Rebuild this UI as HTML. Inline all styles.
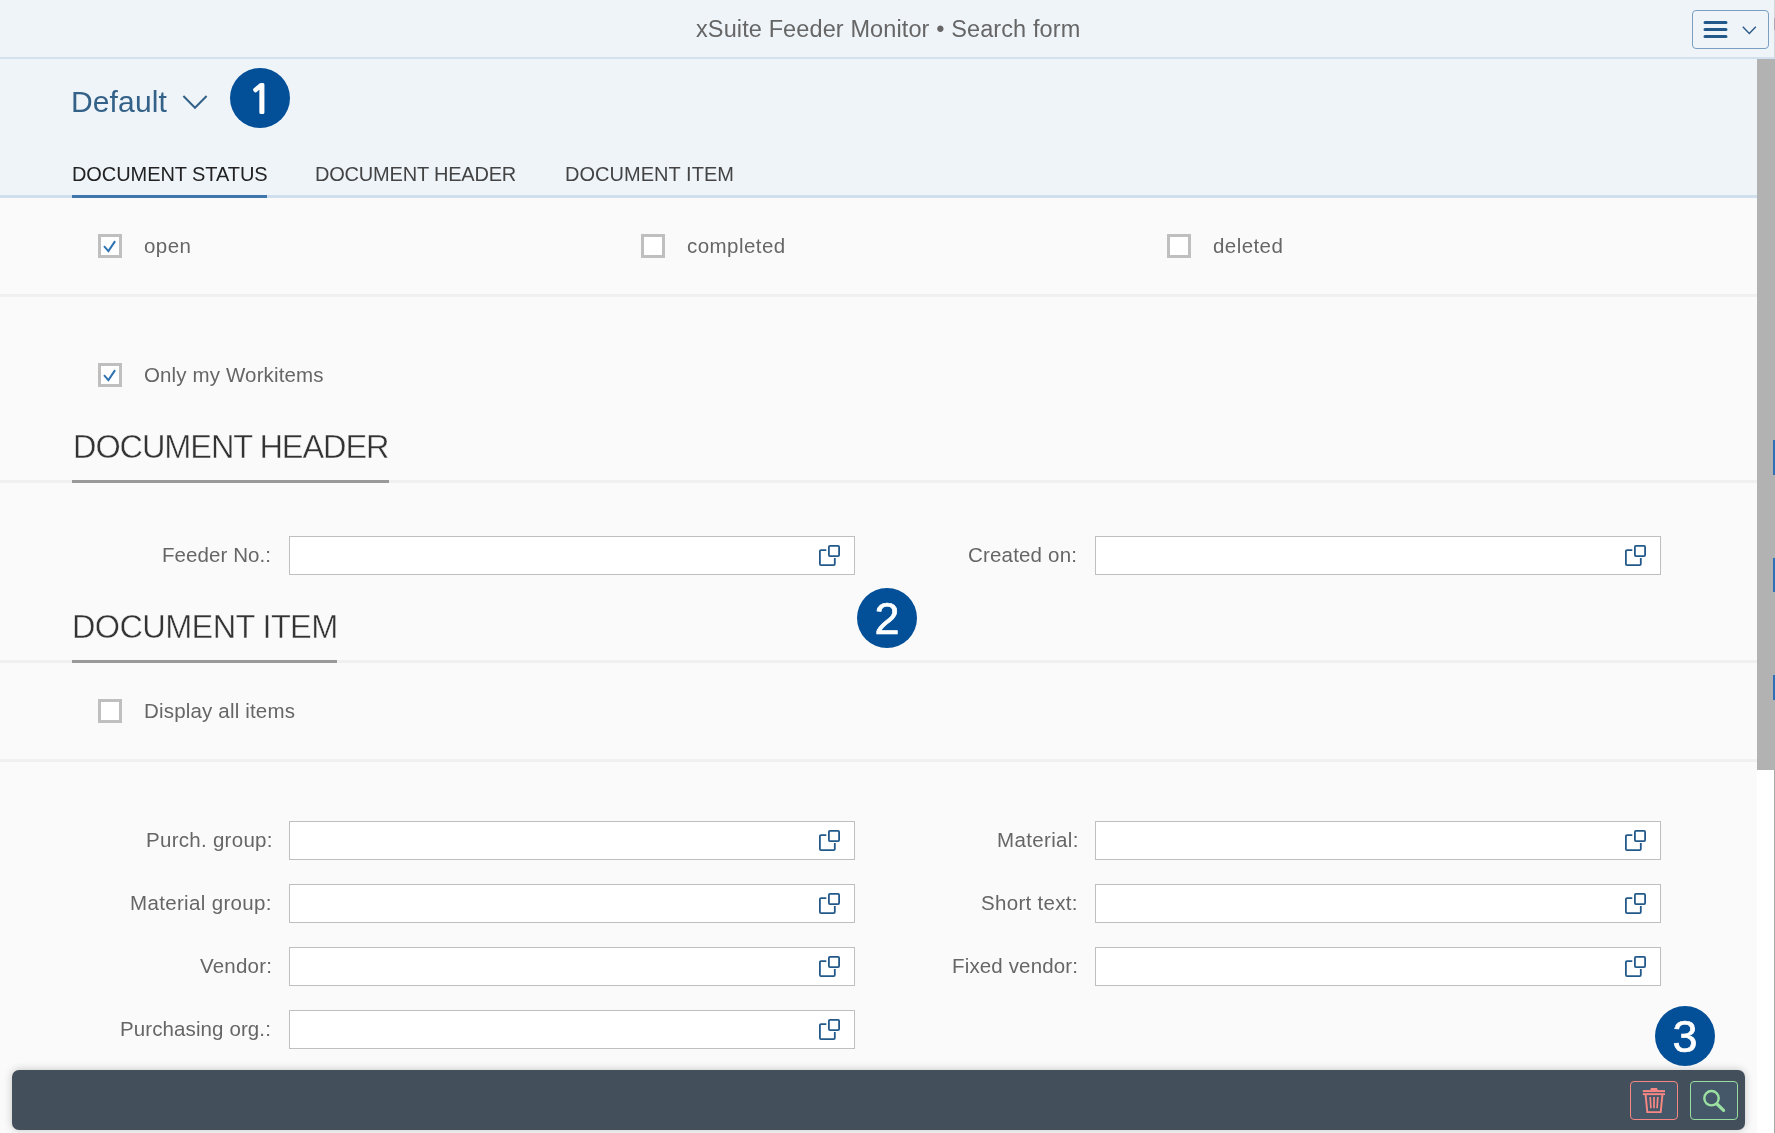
<!DOCTYPE html>
<html><head><meta charset="utf-8"><title>xSuite Feeder Monitor</title>
<style>
*{box-sizing:border-box;margin:0;padding:0}
html,body{width:1775px;height:1133px;overflow:hidden;background:#fafafa;font-family:"Liberation Sans",sans-serif;color:#666}
.abs{position:absolute}
.t{position:absolute;white-space:nowrap;will-change:transform}
#top{left:0;top:0;width:1775px;height:59px;background:#eff4f9;border-bottom:2px solid #d3e1ef}
#menu{left:1692px;top:10px;width:77px;height:39px;border:1px solid #7a9fc2;border-radius:4px;background:#eff4f9}
#hdr{left:0;top:59px;width:1757px;height:139px;background:#eff4f9;border-bottom:3px solid #d0dfee}
#sb{left:1757px;top:59px;width:18px;height:711px;background:#b2b2b2}
#sbw{left:1757px;top:770px;width:18px;height:363px;background:#fff}
.circ{will-change:transform;width:60px;height:60px;border-radius:50%;background:#034f98;color:#fff;font-size:45px;line-height:60px;text-align:center;-webkit-text-stroke:0.7px #fff;padding-top:0.5px}
.c1{font-family:"NanumGothic","Liberation Sans",sans-serif;font-size:40px;-webkit-text-stroke:2.2px #fff;padding-top:1px;padding-left:1px}
.cb{width:24px;height:24px;border:3px solid #bfbfbf;background:#fff}
.inp{width:566px;height:39px;border:1px solid #bfbfbf;background:#fff}
.sep{left:0;width:1757px;height:3px;background:#f0f0f0}
.ul{height:3px;background:#999;left:72px}
#foot{left:12px;top:1070px;width:1733px;height:60px;background:#434f5b;border-radius:7px;box-shadow:0 0 8px rgba(0,0,0,.22)}
.fb{top:1081px;width:48px;height:39px;border-radius:4px;background:#44586a}
</style></head><body>
<div class="abs" id="top"></div>
<div class="t" id="title" style="left:695.80px;top:14.00px;font-size:23.5px;line-height:30px;letter-spacing:0.112px;color:#666;">xSuite Feeder Monitor • Search form</div>
<div class="abs" id="menu">
<svg class="abs" style="left:-1px;top:-1px" width="77" height="39" viewBox="0 0 77 39"><path d="M13 12.5h21M13 19.5h21M13 26.4h21" stroke="#23598a" stroke-width="3" stroke-linecap="round"/><path d="M50.8 16.7l6.5 6.7 6.5-6.7" fill="none" stroke="#2b5a86" stroke-width="1.4"/></svg>
</div>
<div class="abs" id="hdr"></div>
<div class="abs" id="sb"></div><div class="abs" id="sbw"></div>
<div class="abs" style="left:1774px;top:0;width:1px;height:58px;background:#d3d6da"></div>
<div class="abs" style="left:1774px;top:18px;width:1px;height:12px;background:#a9abae"></div>
<div class="abs" style="left:1774px;top:770px;width:1px;height:363px;background:#a8a8a8"></div>
<div class="abs" style="left:1773px;top:440px;width:2px;height:35px;background:#2f6fb5"></div>
<div class="abs" style="left:1773px;top:558px;width:2px;height:34px;background:#2f6fb5"></div>
<div class="abs" style="left:1773px;top:675px;width:2px;height:25px;background:#2f6fb5"></div>
<div class="t" id="default" style="left:71.20px;top:83.00px;font-size:30px;line-height:38px;letter-spacing:0.132px;color:#346187;">Default</div>
<svg class="abs" style="left:180px;top:90px" width="30" height="24" viewBox="0 0 30 24"><path d="M3.4 6l11.6 11.8 11.6-11.8" fill="none" stroke="#346187" stroke-width="2"/></svg>
<div class="abs circ c1" style="left:230px;top:68px">1</div>
<div class="t" id="tab1" style="left:71.80px;top:162.00px;font-size:20px;line-height:24px;letter-spacing:-0.071px;color:#222;">DOCUMENT STATUS</div>
<div class="t" id="tab2" style="left:315.40px;top:162.00px;font-size:20px;line-height:24px;letter-spacing:-0.199px;color:#444;">DOCUMENT HEADER</div>
<div class="t" id="tab3" style="left:565.40px;top:162.00px;font-size:20px;line-height:24px;letter-spacing:0.033px;color:#444;">DOCUMENT ITEM</div>
<div class="abs" style="left:72px;top:195px;width:195px;height:3px;background:#3f76ab"></div>
<div class="abs cb" style="left:98px;top:234px"></div>
<svg class="abs" style="left:98px;top:234px" width="24" height="24" viewBox="0 0 24 24"><path d="M6 12.2l4.4 4.9 6.7-10" fill="none" stroke="#2f73b3" stroke-width="2"/></svg>
<div class="t" id="open" style="left:143.60px;top:234.00px;font-size:20.5px;line-height:24px;letter-spacing:0.467px;color:#666;">open</div>
<div class="abs cb" style="left:641px;top:234px"></div>
<div class="t" id="completed" style="left:687.40px;top:234.00px;font-size:20.5px;line-height:24px;letter-spacing:0.450px;color:#666;">completed</div>
<div class="abs cb" style="left:1167px;top:234px"></div>
<div class="t" id="deleted" style="left:1213.00px;top:234.00px;font-size:20.5px;line-height:24px;letter-spacing:0.433px;color:#666;">deleted</div>
<div class="abs sep" style="top:294px"></div>
<div class="abs cb" style="left:98px;top:363px"></div>
<svg class="abs" style="left:98px;top:363px" width="24" height="24" viewBox="0 0 24 24"><path d="M6 12.2l4.4 4.9 6.7-10" fill="none" stroke="#2f73b3" stroke-width="2"/></svg>
<div class="t" id="only" style="left:143.80px;top:363.00px;font-size:20.5px;line-height:24px;letter-spacing:0.139px;color:#666;">Only my Workitems</div>
<div class="t" id="h2a" style="left:72.60px;top:428.00px;font-size:32.5px;line-height:38px;letter-spacing:-1.086px;color:#333;-webkit-text-stroke:0.45px #fafafa;">DOCUMENT HEADER</div>
<div class="abs sep" style="top:480px"></div><div class="abs ul" style="top:480px;width:317px"></div>
<div class="t" id="feeder" style="left:162.00px;top:543.00px;font-size:20.5px;line-height:24px;letter-spacing:0.080px;color:#666;">Feeder No.:</div>
<div class="abs inp" style="left:289px;top:536px"></div>
<svg class="abs" style="left:815px;top:536px" width="40" height="39" viewBox="0 0 40 39"><g fill="none" stroke="#23598a" stroke-width="1.8"><rect x="13.9" y="9.9" width="10.2" height="10.2" rx="1"/><path d="M11.3 14.1H6a1.1 1.1 0 0 0-1.1 1.1V28a1.1 1.1 0 0 0 1.1 1.1h12.7a1.1 1.1 0 0 0 1.1-1.1V22"/></g></svg>
<div class="t" id="created" style="left:968.20px;top:543.00px;font-size:20.5px;line-height:24px;letter-spacing:0.180px;color:#666;">Created on:</div>
<div class="abs inp" style="left:1095px;top:536px"></div>
<svg class="abs" style="left:1621px;top:536px" width="40" height="39" viewBox="0 0 40 39"><g fill="none" stroke="#23598a" stroke-width="1.8"><rect x="13.9" y="9.9" width="10.2" height="10.2" rx="1"/><path d="M11.3 14.1H6a1.1 1.1 0 0 0-1.1 1.1V28a1.1 1.1 0 0 0 1.1 1.1h12.7a1.1 1.1 0 0 0 1.1-1.1V22"/></g></svg>
<div class="t" id="h2b" style="left:72.00px;top:608.00px;font-size:32.5px;line-height:38px;letter-spacing:-0.634px;color:#333;-webkit-text-stroke:0.45px #fafafa;">DOCUMENT ITEM</div>
<div class="abs sep" style="top:660px"></div><div class="abs ul" style="top:660px;width:265px"></div>
<div class="abs circ" style="left:857px;top:588px">2</div>
<div class="abs cb" style="left:98px;top:699px"></div>
<div class="t" id="display" style="left:144.00px;top:699.00px;font-size:20.5px;line-height:24px;letter-spacing:0.177px;color:#666;">Display all items</div>
<div class="abs sep" style="top:759px"></div>
<div class="t" id="purch" style="left:145.60px;top:828.00px;font-size:20.5px;line-height:24px;letter-spacing:0.282px;color:#666;">Purch. group:</div>
<div class="abs inp" style="left:289px;top:821px"></div>
<svg class="abs" style="left:815px;top:821px" width="40" height="39" viewBox="0 0 40 39"><g fill="none" stroke="#23598a" stroke-width="1.8"><rect x="13.9" y="9.9" width="10.2" height="10.2" rx="1"/><path d="M11.3 14.1H6a1.1 1.1 0 0 0-1.1 1.1V28a1.1 1.1 0 0 0 1.1 1.1h12.7a1.1 1.1 0 0 0 1.1-1.1V22"/></g></svg>
<div class="t" id="material" style="left:996.60px;top:828.00px;font-size:20.5px;line-height:24px;letter-spacing:0.346px;color:#666;">Material:</div>
<div class="abs inp" style="left:1095px;top:821px"></div>
<svg class="abs" style="left:1621px;top:821px" width="40" height="39" viewBox="0 0 40 39"><g fill="none" stroke="#23598a" stroke-width="1.8"><rect x="13.9" y="9.9" width="10.2" height="10.2" rx="1"/><path d="M11.3 14.1H6a1.1 1.1 0 0 0-1.1 1.1V28a1.1 1.1 0 0 0 1.1 1.1h12.7a1.1 1.1 0 0 0 1.1-1.1V22"/></g></svg>
<div class="t" id="matgroup" style="left:130.20px;top:891.00px;font-size:20.5px;line-height:24px;letter-spacing:0.342px;color:#666;">Material group:</div>
<div class="abs inp" style="left:289px;top:884px"></div>
<svg class="abs" style="left:815px;top:884px" width="40" height="39" viewBox="0 0 40 39"><g fill="none" stroke="#23598a" stroke-width="1.8"><rect x="13.9" y="9.9" width="10.2" height="10.2" rx="1"/><path d="M11.3 14.1H6a1.1 1.1 0 0 0-1.1 1.1V28a1.1 1.1 0 0 0 1.1 1.1h12.7a1.1 1.1 0 0 0 1.1-1.1V22"/></g></svg>
<div class="t" id="short" style="left:981.40px;top:891.00px;font-size:20.5px;line-height:24px;letter-spacing:0.300px;color:#666;">Short text:</div>
<div class="abs inp" style="left:1095px;top:884px"></div>
<svg class="abs" style="left:1621px;top:884px" width="40" height="39" viewBox="0 0 40 39"><g fill="none" stroke="#23598a" stroke-width="1.8"><rect x="13.9" y="9.9" width="10.2" height="10.2" rx="1"/><path d="M11.3 14.1H6a1.1 1.1 0 0 0-1.1 1.1V28a1.1 1.1 0 0 0 1.1 1.1h12.7a1.1 1.1 0 0 0 1.1-1.1V22"/></g></svg>
<div class="t" id="vendor" style="left:199.80px;top:954.00px;font-size:20.5px;line-height:24px;letter-spacing:0.201px;color:#666;">Vendor:</div>
<div class="abs inp" style="left:289px;top:947px"></div>
<svg class="abs" style="left:815px;top:947px" width="40" height="39" viewBox="0 0 40 39"><g fill="none" stroke="#23598a" stroke-width="1.8"><rect x="13.9" y="9.9" width="10.2" height="10.2" rx="1"/><path d="M11.3 14.1H6a1.1 1.1 0 0 0-1.1 1.1V28a1.1 1.1 0 0 0 1.1 1.1h12.7a1.1 1.1 0 0 0 1.1-1.1V22"/></g></svg>
<div class="t" id="fixed" style="left:951.60px;top:954.00px;font-size:20.5px;line-height:24px;letter-spacing:0.150px;color:#666;">Fixed vendor:</div>
<div class="abs inp" style="left:1095px;top:947px"></div>
<svg class="abs" style="left:1621px;top:947px" width="40" height="39" viewBox="0 0 40 39"><g fill="none" stroke="#23598a" stroke-width="1.8"><rect x="13.9" y="9.9" width="10.2" height="10.2" rx="1"/><path d="M11.3 14.1H6a1.1 1.1 0 0 0-1.1 1.1V28a1.1 1.1 0 0 0 1.1 1.1h12.7a1.1 1.1 0 0 0 1.1-1.1V22"/></g></svg>
<div class="t" id="purchorg" style="left:120.40px;top:1017.00px;font-size:20.5px;line-height:24px;letter-spacing:0.105px;color:#666;">Purchasing org.:</div>
<div class="abs inp" style="left:289px;top:1010px"></div>
<svg class="abs" style="left:815px;top:1010px" width="40" height="39" viewBox="0 0 40 39"><g fill="none" stroke="#23598a" stroke-width="1.8"><rect x="13.9" y="9.9" width="10.2" height="10.2" rx="1"/><path d="M11.3 14.1H6a1.1 1.1 0 0 0-1.1 1.1V28a1.1 1.1 0 0 0 1.1 1.1h12.7a1.1 1.1 0 0 0 1.1-1.1V22"/></g></svg>
<div class="abs" id="foot"></div>
<div class="abs fb" style="left:1630px;border:1px solid #f58682"></div>
<div class="abs fb" style="left:1690px;border:1px solid #98dca0"></div>
<svg class="abs" style="left:1630px;top:1081px" width="48" height="39" viewBox="0 0 48 39"><g fill="#f98884"><path d="M20.2 9.2l0.8-2.2h6l0.8 2.2z"/><rect x="12.8" y="9.1" width="22.2" height="2"/><rect x="12.8" y="12.2" width="22.2" height="1.9"/></g><g fill="none" stroke="#f98884"><path d="M15.6 14l1.7 17.1h13.4l1.7-17.1" stroke-width="1.9"/><path d="M20.2 16l0.7 11.3M24 16v11.3M27.8 16l-0.7 11.3" stroke-width="1.7"/></g></svg>
<svg class="abs" style="left:1690px;top:1081px" width="48" height="39" viewBox="0 0 48 39"><g fill="none" stroke="#9be0a0"><circle cx="21.5" cy="17.2" r="7.2" stroke-width="2.4"/><path d="M27 23l6.6 6.3" stroke-width="3.2" stroke-linecap="round"/></g></svg>
<div class="abs circ" style="left:1655px;top:1006px">3</div>
</body></html>
